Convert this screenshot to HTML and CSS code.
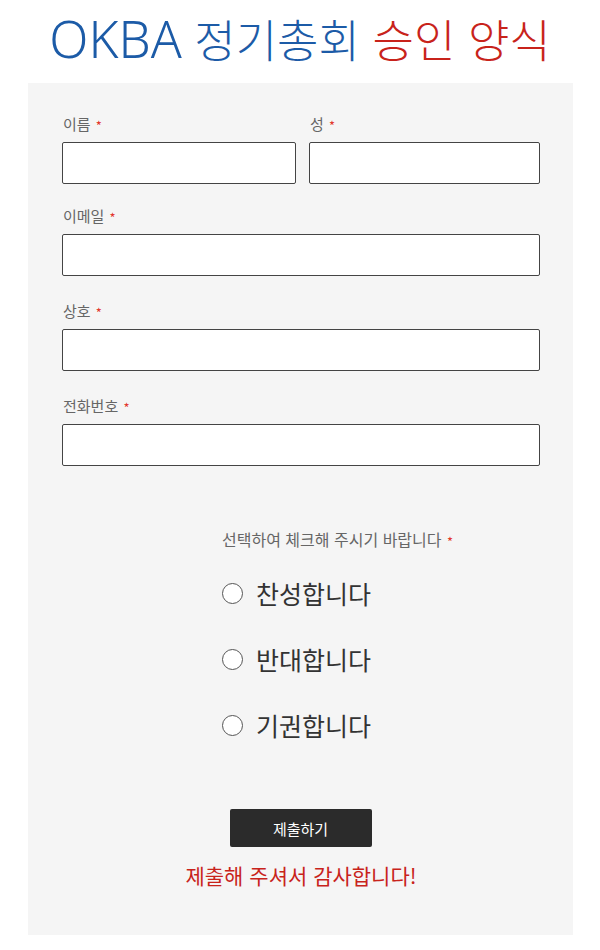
FILE: index.html
```html
<!DOCTYPE html>
<html lang="ko">
<head>
<meta charset="utf-8">
<title>OKBA 정기총회 승인 양식</title>
<link rel="stylesheet" href="styles.css">
</head>
<body>
<h1 class="title"><span class="title-latin">OKBA</span><span class="title-blue"> 정기총회 </span><span class="title-red">승인 양식</span></h1>
<form class="panel">
  <div class="fields">
    <div class="name-row">
      <div class="field">
        <label class="label">이름 <span class="req">*</span></label>
        <input class="input" type="text">
      </div>
      <div class="field">
        <label class="label">성 <span class="req">*</span></label>
        <input class="input" type="text">
      </div>
    </div>
    <div class="field">
      <label class="label">이메일 <span class="req">*</span></label>
      <input class="input" type="email">
    </div>
    <div class="field">
      <label class="label">상호 <span class="req">*</span></label>
      <input class="input" type="text">
    </div>
    <div class="field">
      <label class="label">전화번호 <span class="req">*</span></label>
      <input class="input" type="tel">
    </div>
  </div>
  <div class="choice">
    <div class="choice-label">선택하여 체크해 주시기 바랍니다 <span class="req">*</span></div>
    <div class="options">
      <label class="option"><span class="radio"></span><span class="option-text">찬성합니다</span></label>
      <label class="option"><span class="radio"></span><span class="option-text">반대합니다</span></label>
      <label class="option"><span class="radio"></span><span class="option-text">기권합니다</span></label>
    </div>
  </div>
  <div class="actions">
    <button class="submit" type="button">제출하기</button>
    <p class="thanks">제출해 주셔서 감사합니다!</p>
  </div>
</form>
</body>
</html>
```
FILE: styles.css
```css
* { box-sizing: border-box; }
html, body { margin: 0; padding: 0; background: #ffffff; }
body {
  width: 600px;
  font-family: "Noto Sans CJK KR", "Noto Sans", sans-serif;
  color: #333;
}
.title {
  margin: 0;
  height: 83px;
  padding-bottom: 6px;
  line-height: 77px;
  font-size: 45px;
  font-weight: 300;
  text-align: center;
  white-space: nowrap;
}
.title-latin {
  font-family: "Noto Sans", sans-serif;
  font-size: 51px;
  line-height: 1;
  color: #1c5ba7;
}
.title-blue { color: #1c5ba7; }
.title-red { color: #c8231b; }

.panel {
  display: block;
  margin: 0 27px 0 28px;
  background: #f5f5f5;
  padding: 31px 33px 46px 34px;
}
.fields {
  display: flex;
  flex-direction: column;
  gap: 25px;
}
.name-row {
  display: grid;
  grid-template-columns: 234px 1fr;
  column-gap: 13px;
  margin-bottom: -3px;
}
.field {
  display: flex;
  flex-direction: column;
}
.label {
  display: block;
  height: 20px;
  font-size: 15px;
  line-height: 20px;
  color: #666;
  margin-bottom: 8px;
  padding-left: 1px;
}
.req {
  color: #e2372c;
  font-size: 13px;
  line-height: 1;
  position: relative;
  top: 1px;
  margin-left: 1px;
}
.input {
  display: block;
  width: 100%;
  height: 42px;
  margin: 0;
  border: 1px solid #444;
  border-radius: 2px;
  background: #fff;
  font: inherit;
}

.choice {
  margin-top: 62px;
  padding-left: 160px;
}
.choice-label {
  height: 22px;
  font-size: 16px;
  line-height: 22px;
  color: #666;
  white-space: nowrap;
}
.options {
  display: flex;
  flex-direction: column;
  gap: 22px;
  margin-top: 21px;
}
.option {
  display: flex;
  align-items: center;
  gap: 13px;
  height: 44px;
}
.radio {
  width: 21px;
  height: 21px;
  border: 1.5px solid #555;
  border-radius: 50%;
  background: #fff;
  flex: none;
}
.option-text {
  font-size: 25px;
  color: #333;
  line-height: 30px;
}

.actions {
  margin-top: 62px;
  display: flex;
  flex-direction: column;
  align-items: center;
}
.submit {
  width: 142px;
  height: 38px;
  background: #2b2b2b;
  color: #fff;
  border: none;
  border-radius: 2px;
  font-family: "Noto Sans CJK KR", sans-serif;
  font-size: 15px;
  padding: 0;
  margin-right: 1px;
}
.thanks {
  margin: 14px 0 0;
  height: 28px;
  font-size: 21px;
  line-height: 28px;
  color: #c8231b;
}
```
